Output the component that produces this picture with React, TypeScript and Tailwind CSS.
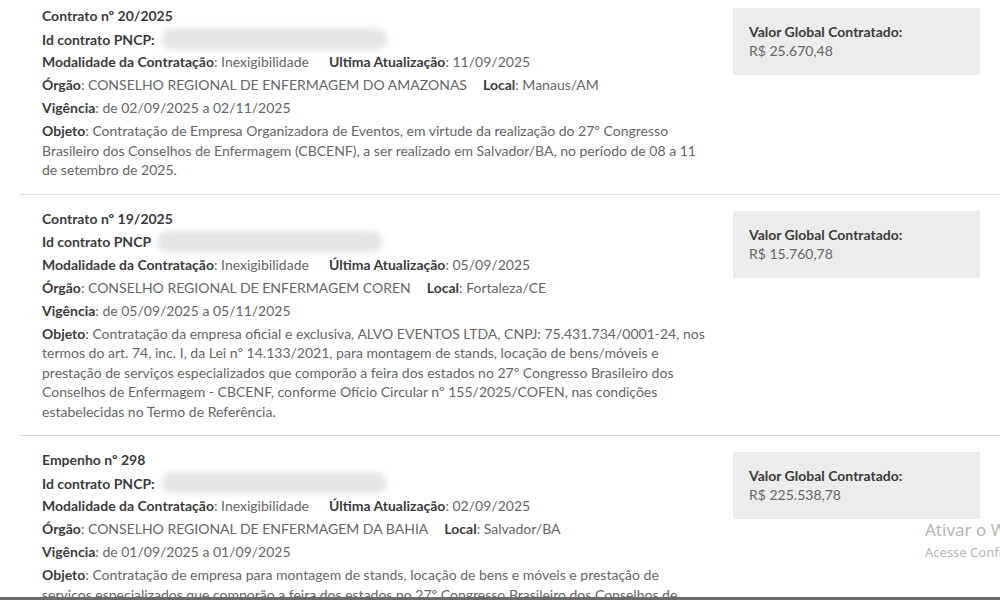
import React from "react";

type Entry = {
  title: string;
  idLabel: string;
  atualLabel: string;
  atual: string;
  orgao: string;
  local: string;
  vigencia: string;
  objeto: string[];
  valor: string;
};

const entries: Entry[] = [
  {
    title: "Contrato nº 20/2025",
    idLabel: "Id contrato PNCP:",
    atualLabel: "Ultima Atualização",
    atual: "11/09/2025",
    orgao: "CONSELHO REGIONAL DE ENFERMAGEM DO AMAZONAS",
    local: "Manaus/AM",
    vigencia: "de 02/09/2025 a 02/11/2025",
    objeto: [
      "Contratação de Empresa Organizadora de Eventos, em virtude da realização do 27º Congresso",
      "Brasileiro dos Conselhos de Enfermagem (CBCENF), a ser realizado em Salvador/BA, no período de 08 a 11",
      "de setembro de 2025.",
    ],
    valor: "R$ 25.670,48",
  },
  {
    title: "Contrato nº 19/2025",
    idLabel: "Id contrato PNCP",
    atualLabel: "Última Atualização",
    atual: "05/09/2025",
    orgao: "CONSELHO REGIONAL DE ENFERMAGEM COREN",
    local: "Fortaleza/CE",
    vigencia: "de 05/09/2025 a 05/11/2025",
    objeto: [
      "Contratação da empresa oficial e exclusiva, ALVO EVENTOS LTDA, CNPJ: 75.431.734/0001-24, nos",
      "termos do art. 74, inc. I, da Lei nº 14.133/2021, para montagem de stands, locação de bens/móveis e",
      "prestação de serviços especializados que comporão a feira dos estados no 27º Congresso Brasileiro dos",
      "Conselhos de Enfermagem - CBCENF, conforme Ofício Circular nº 155/2025/COFEN, nas condições",
      "estabelecidas no Termo de Referência.",
    ],
    valor: "R$ 15.760,78",
  },
  {
    title: "Empenho nº 298",
    idLabel: "Id contrato PNCP:",
    atualLabel: "Última Atualização",
    atual: "02/09/2025",
    orgao: "CONSELHO REGIONAL DE ENFERMAGEM DA BAHIA",
    local: "Salvador/BA",
    vigencia: "de 01/09/2025 a 01/09/2025",
    objeto: [
      "Contratação de empresa para montagem de stands, locação de bens e móveis e prestação de",
      "serviços especializados que comporão a feira dos estados no 27º Congresso Brasileiro dos Conselhos de",
      "Enfermagem - CBCENF.",
    ],
    valor: "R$ 225.538,78",
  },
];

function Label({ children }: { children: React.ReactNode }) {
  return <span className="font-bold text-[#3b3b3b]">{children}</span>;
}

function EntryRow({ e, last }: { e: Entry; last: boolean }) {
  return (
    <div
      className={`flex justify-between pl-[22px] pt-[14px] pb-[14px] ${
        last ? "" : "border-b border-[#dcdcdc]"
      }`}
    >
      <div className="w-[690px] whitespace-nowrap text-[14px] leading-[19.5px] text-[#666]">
        <p className="mb-[4px] font-bold text-[#3b3b3b]">{e.title}</p>
        <div className="mb-[3px] flex h-[19.5px] items-center">
          <Label>{e.idLabel}</Label>
          <div className="ml-[6px] h-[22px] w-[226px] rounded-full bg-[#e6e6e6] blur-[3px]" />
        </div>
        <p className="mb-[3.5px]">
          <Label>Modalidade da Contratação</Label>: Inexigibilidade
          <span className="ml-[20px]">
            <Label>{e.atualLabel}</Label>: {e.atual}
          </span>
        </p>
        <p className="mb-[3.5px]">
          <Label>Órgão</Label>: {e.orgao}
          <span className="ml-[16px]">
            <Label>Local</Label>: {e.local}
          </span>
        </p>
        <p className="mb-[3.5px]">
          <Label>Vigência</Label>: {e.vigencia}
        </p>
        <p>
          <Label>Objeto</Label>:{" "}
          {e.objeto.map((l, i) => (
            <React.Fragment key={i}>
              {l}
              {i < e.objeto.length - 1 && <br />}
            </React.Fragment>
          ))}
        </p>
      </div>
      <div className="mr-[20px] mt-[2px] h-[67px] w-[247px] shrink-0 bg-[#ececec] px-[16px] pt-[14px] text-[14px] leading-[19px]">
        <p className="font-bold text-[#3b3b3b]">Valor Global Contratado:</p>
        <p className="text-[#666]">{e.valor}</p>
      </div>
    </div>
  );
}

export default function App() {
  return (
    <div
      className="relative h-[600px] w-[1000px] overflow-hidden bg-white"
      style={{ fontFamily: "Lato, 'Open Sans', sans-serif" }}
    >
      <div className="ml-[20px] mt-[-8px]">
        {entries.map((e, i) => (
          <EntryRow key={i} e={e} last={i === entries.length - 1} />
        ))}
      </div>
      <div
        className="absolute left-[925px] top-[518px] whitespace-nowrap text-[#b5b5b5]"
        style={{ fontFamily: "'Noto Sans', 'DejaVu Sans', sans-serif" }}
      >
        <p className="text-[17px] leading-[24px]">Ativar o Windows</p>
        <p className="text-[13px] leading-[20px]">Acesse Configurações para ativar o Windows.</p>
      </div>
      <div className="absolute bottom-0 left-0 h-[3px] w-full bg-[#6b6b6b]" />
    </div>
  );
}
